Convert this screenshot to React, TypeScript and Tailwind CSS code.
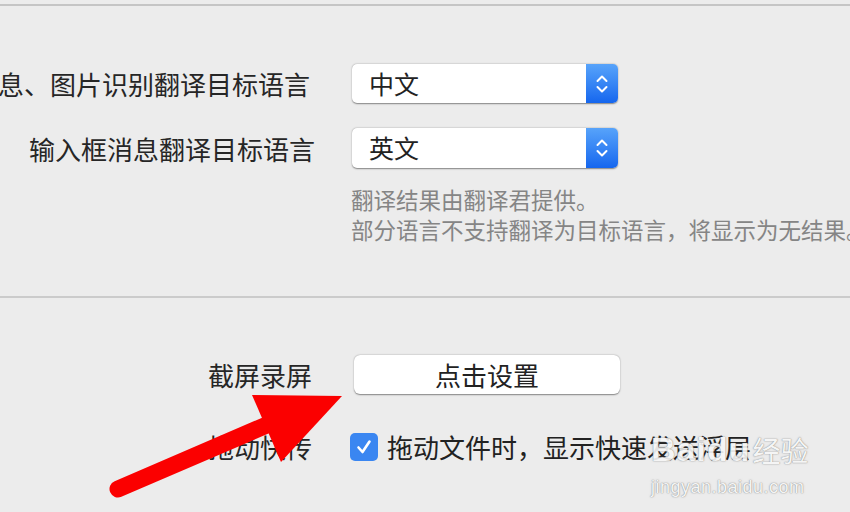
import React from "react";

const font = { fontFamily: '"Noto Sans CJK SC", "Noto Sans", sans-serif' };

function Chevrons() {
  return (
    <svg width="14" height="22" viewBox="0 0 14 22" fill="none">
      <path d="M2.5 8 L7 3.5 L11.5 8" stroke="white" strokeWidth="2" strokeLinecap="round" strokeLinejoin="round" />
      <path d="M2.5 14 L7 18.5 L11.5 14" stroke="white" strokeWidth="2" strokeLinecap="round" strokeLinejoin="round" />
    </svg>
  );
}

function Popup({ value, height }: { value: string; height: string }) {
  return (
    <div
      className={`flex w-[266px] ${height} items-stretch rounded-[5px] bg-white shadow-[0_0.5px_1.5px_rgba(0,0,0,0.45)]`}
    >
      <div className="flex flex-1 items-center pl-[17px] text-[25px] text-[#222]">{value}</div>
      <div className="flex w-[32px] items-center justify-center rounded-r-[5px] bg-gradient-to-b from-[#57a3fa] to-[#1566ee]">
        <Chevrons />
      </div>
    </div>
  );
}

function Row({ label, children, labelPad = "pr-0" }: { label: string; children: React.ReactNode; labelPad?: string }) {
  return (
    <div className="flex items-center">
      <div className={`w-[315px] shrink-0 whitespace-nowrap text-right text-[26px] text-[#262626] ${labelPad}`}>
        <span className="float-right">{label}</span>
      </div>
      <div className="ml-[37px]">{children}</div>
    </div>
  );
}

export default function App() {
  return (
    <div className="relative h-[512px] w-[850px] overflow-hidden bg-[#ececec]" style={font}>
      <div className="mt-[4px] h-[2px] bg-[#c5c5c5]" />

      <div className="mt-[58px] flex flex-col">
        <Row label="息、图片识别翻译目标语言" labelPad="pr-[5px]">
          <Popup value="中文" height="h-[39px]" />
        </Row>
        <div className="mt-[25px]">
          <Row label="输入框消息翻译目标语言">
            <Popup value="英文" height="h-[40px]" />
          </Row>
        </div>
        <div className="ml-[351px] mt-[16px] whitespace-nowrap text-[22.5px] leading-[30px] text-[#858585]">
          <div>翻译结果由翻译君提供。</div>
          <div>部分语言不支持翻译为目标语言，将显示为无结果。</div>
        </div>
      </div>

      <div className="mt-[52px] h-[2px] bg-[#cbcbcb]" />

      <div className="mt-[57px] flex flex-col">
        <Row label="截屏录屏" labelPad="pr-[3px]">
          <button className="ml-[2px] flex h-[39px] w-[266px] items-center justify-center rounded-[6px] bg-white text-[26px] text-[#222] shadow-[0_0.5px_1.5px_rgba(0,0,0,0.45)]">
            点击设置
          </button>
        </Row>
        <div className="mt-[33px]">
          <Row label="拖动快传" labelPad="pr-[3px]">
            <div className="-ml-[2px] flex items-center">
              <div className="flex h-[28px] w-[28px] items-center justify-center rounded-[5px] bg-[#3a86f1]">
                <svg width="18" height="18" viewBox="0 0 18 18" fill="none">
                  <path d="M3.5 9.5 L7.5 14 L14.5 3.5" stroke="white" strokeWidth="2.6" strokeLinecap="round" strokeLinejoin="round" />
                </svg>
              </div>
              <span className="ml-[9px] whitespace-nowrap text-[26px] text-[#222]">拖动文件时，显示快速发送浮层</span>
            </div>
          </Row>
        </div>
      </div>

      {/* watermark */}
      <div className="pointer-events-none absolute left-[651px] top-[432px] flex flex-col items-start text-[#f7f7f7] opacity-90 [text-shadow:0_0_1px_rgba(100,100,100,0.9),0_0_2px_rgba(140,140,140,0.5)]">
        <div className="flex items-end leading-none">
          <span className="text-[34px] font-bold tracking-[1px]" style={{ fontFamily: '"Liberation Sans", sans-serif' }}>
            Baidu
          </span>
          <span className="ml-[2px] pb-[2px] text-[28px]">经验</span>
        </div>
        <span className="mt-[12px] text-[18px] leading-none tracking-[0.5px]" style={{ fontFamily: '"Liberation Sans", sans-serif' }}>
          jingyan.baidu.com
        </span>
      </div>

      {/* red arrow annotation */}
      <svg className="pointer-events-none absolute left-0 top-0" width="850" height="512" viewBox="0 0 850 512">
        <line x1="118" y1="489" x2="290" y2="415" stroke="#fb0000" strokeWidth="17" strokeLinecap="round" />
        <polygon points="252,395 342,396 281,462" fill="#fb0000" />
      </svg>
    </div>
  );
}
